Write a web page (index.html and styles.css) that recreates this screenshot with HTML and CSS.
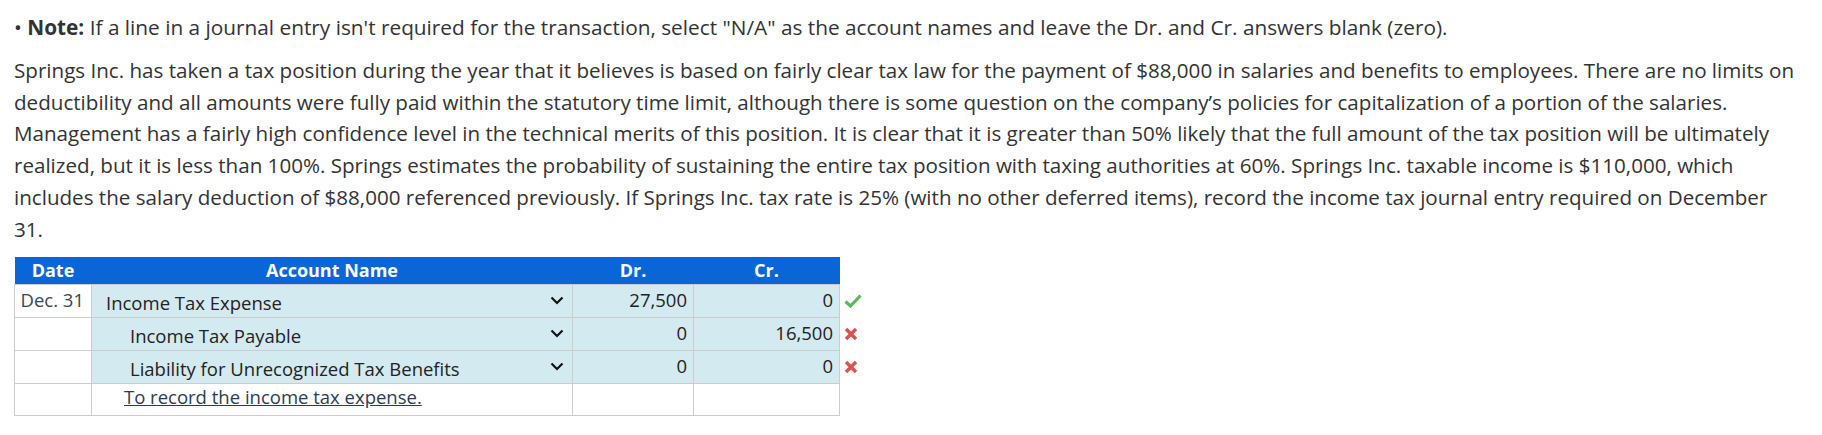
FILE: index.html
```html
<!DOCTYPE html>
<html>
<head>
<meta charset="utf-8">
<link rel="stylesheet" href="styles.css">
</head>
<body>
<div class="page">
  <p class="note">&#8226; <b>Note:</b> If a line in a journal entry isn't required for the transaction, select "N/A" as the account names and leave the Dr. and Cr. answers blank (zero).</p>
  <p class="problem">Springs Inc. has taken a tax position during the year that it believes is based on fairly clear tax law for the payment of $88,000 in salaries and benefits to employees. There are no limits on deductibility and all amounts were fully paid within the statutory time limit, although there is some question on the company’s policies for capitalization of a portion of the salaries. Management has a fairly high confidence level in the technical merits of this position. It is clear that it is greater than 50% likely that the full amount of the tax position will be ultimately realized, but it is less than 100%. Springs estimates the probability of sustaining the entire tax position with taxing authorities at 60%. Springs Inc. taxable income is $110,000, which includes the salary deduction of $88,000 referenced previously. If Springs Inc. tax rate is 25% (with no other deferred items), record the income tax journal entry required on December 31.</p>
  <table class="journal">
    <colgroup>
      <col class="c-date"><col class="c-acct"><col class="c-dr"><col class="c-cr"><col class="c-mark">
    </colgroup>
    <thead>
      <tr><th>Date</th><th>Account Name</th><th>Dr.</th><th>Cr.</th><th class="mark-h"></th></tr>
    </thead>
    <tbody>
      <tr>
        <td class="date">Dec. 31</td>
        <td class="acct"><div class="sel"><span class="name">Income Tax Expense</span><svg class="chev" width="14" height="9" viewBox="0 0 14 9"><path d="M1.5 1.5 L7 7 L12.5 1.5" fill="none" stroke="#111" stroke-width="2.2"/></svg></div></td>
        <td class="num">27,500</td>
        <td class="num">0</td>
        <td class="mark"><svg width="18" height="14" viewBox="0 0 18 14"><path d="M1.5 7.5 L6.5 12 L16.5 1.5" fill="none" stroke="#5cb85c" stroke-width="3.2"/></svg></td>
      </tr>
      <tr>
        <td class="date"></td>
        <td class="acct"><div class="sel indent"><span class="name">Income Tax Payable</span><svg class="chev" width="14" height="9" viewBox="0 0 14 9"><path d="M1.5 1.5 L7 7 L12.5 1.5" fill="none" stroke="#111" stroke-width="2.2"/></svg></div></td>
        <td class="num">0</td>
        <td class="num">16,500</td>
        <td class="mark"><svg width="14" height="14" viewBox="0 0 14 14"><path d="M2 2 L12 12 M12 2 L2 12" fill="none" stroke="#d9534f" stroke-width="3.4"/></svg></td>
      </tr>
      <tr>
        <td class="date"></td>
        <td class="acct"><div class="sel indent"><span class="name">Liability for Unrecognized Tax Benefits</span><svg class="chev" width="14" height="9" viewBox="0 0 14 9"><path d="M1.5 1.5 L7 7 L12.5 1.5" fill="none" stroke="#111" stroke-width="2.2"/></svg></div></td>
        <td class="num">0</td>
        <td class="num">0</td>
        <td class="mark"><svg width="14" height="14" viewBox="0 0 14 14"><path d="M2 2 L12 12 M12 2 L2 12" fill="none" stroke="#d9534f" stroke-width="3.4"/></svg></td>
      </tr>
      <tr class="explain">
        <td class="date"></td>
        <td class="expl"><a href="#">To record the income tax expense.</a></td>
        <td class="blank"></td>
        <td class="blank"></td>
        <td class="mark"></td>
      </tr>
    </tbody>
  </table>
</div>
</body>
</html>
```

FILE: styles.css
```css
html, body {
  margin: 0;
  padding: 0;
  background: #fff;
}
.page {
  padding: 12px 24px 0 14px;
  font-family: "Open Sans", "Noto Sans", sans-serif;
  font-size: 20.6px;
  color: #333;
}
.note {
  margin: 0 0 11px 0;
  line-height: 31.8px;
  font-size: 20.8px;
}
.note b {
  font-weight: 700;
}
.problem {
  margin: 0 0 11px 0;
  line-height: 31.8px;
}
.journal {
  border-collapse: collapse;
  table-layout: fixed;
  width: 860px;
  font-size: 18.5px;
}
.c-date { width: 77px; }
.c-acct { width: 481px; }
.c-dr { width: 121px; }
.c-cr { width: 146px; }
.c-mark { width: 35px; }
.journal th {
  background: #0a66d6;
  color: #fff;
  font-weight: 700;
  height: 27px;
  padding: 0;
  text-align: center;
  line-height: 27px;
  font-size: 18px;
}
.journal th.mark-h {
  background: #fff;
}
.journal td {
  height: 32px;
  padding: 0;
  border: 1px solid #cccccc;
  box-sizing: border-box;
  vertical-align: middle;
}
.journal td.date {
  background: #fff;
  text-align: right;
  padding-right: 7px;
  color: #3d4552;
  vertical-align: top;
  padding-top: 3px;
  line-height: 24px;
}
.journal td.acct {
  background: #d4eaf1;
  padding: 0 8px 0 14px;
}
.sel {
  display: flex;
  align-items: center;
  justify-content: space-between;
  height: 32px;
}
.sel .name {
  padding-top: 3px;
  color: #222;
}
.sel.indent .name {
  padding-left: 24px;
}
.chev {
  display: block;
}
.journal td.num {
  background: #d4eaf1;
  text-align: right;
  padding-right: 6px;
  color: #222;
  vertical-align: top;
  padding-top: 3px;
  line-height: 24px;
}
.journal td.mark {
  border: none;
  background: #fff;
  padding-left: 4px;
}
.journal td.mark svg {
  display: block;
}
.journal td.expl {
  background: #fff;
  padding-left: 32px;
  padding-top: 0;
  vertical-align: top;
  line-height: 26px;
}
.journal td.expl a {
  color: #2e3d54;
  text-decoration: underline;
}
.journal td.blank {
  background: #fff;
}
```
